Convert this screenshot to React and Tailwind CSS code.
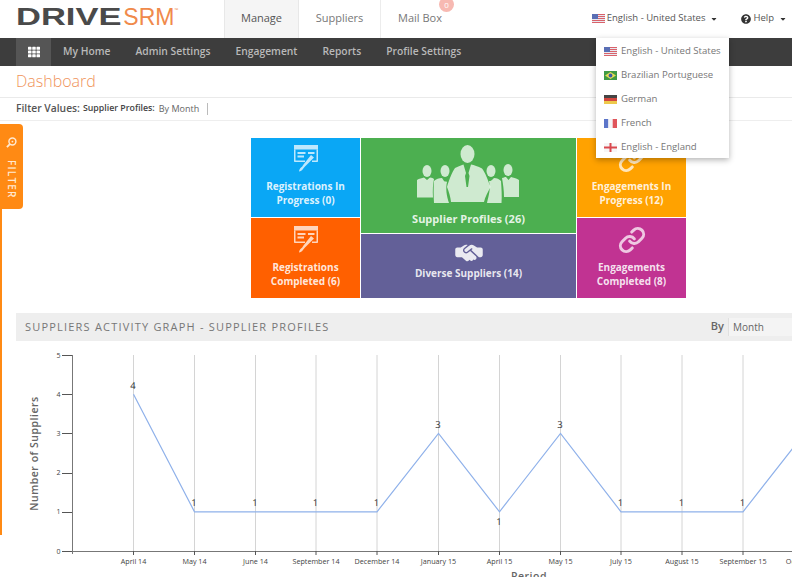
import React from "react";
import { FaTh, FaQuestionCircle, FaCaretDown } from "react-icons/fa";
import { FaHandshakeSimple } from "react-icons/fa6";
import { Link as LinkIcon } from "lucide-react";

const font = { fontFamily: '"Open Sans", sans-serif' };

function FlagUS({ className }) {
  return (
    <svg viewBox="0 0 13 9" className={className}>
      <rect width="13" height="9" fill="#e8e8f0" />
      <path d="M0 0.5H13M0 2.5H13M0 4.5H13M0 6.5H13M0 8.5H13" stroke="#d9626a" strokeWidth="1" />
      <rect width="6" height="5" fill="#5a6fb5" />
    </svg>
  );
}
function FlagBR({ className }) {
  return (
    <svg viewBox="0 0 13 9" className={className}>
      <rect width="13" height="9" fill="#3f9a45" />
      <path d="M6.5 1L12 4.5L6.5 8L1 4.5Z" fill="#e8dc55" />
      <circle cx="6.5" cy="4.5" r="1.9" fill="#3d5da8" />
    </svg>
  );
}
function FlagDE({ className }) {
  return (
    <svg viewBox="0 0 13 9" className={className}>
      <rect width="13" height="3" fill="#444" />
      <rect y="3" width="13" height="3" fill="#d3463f" />
      <rect y="6" width="13" height="3" fill="#eec94c" />
    </svg>
  );
}
function FlagFR({ className }) {
  return (
    <svg viewBox="0 0 13 9" className={className}>
      <rect width="4.4" height="9" fill="#5c75c9" />
      <rect x="4.4" width="4.3" height="9" fill="#f4f4f6" />
      <rect x="8.7" width="4.3" height="9" fill="#e0555b" />
    </svg>
  );
}
function FlagEN({ className }) {
  return (
    <svg viewBox="0 0 13 9" className={className}>
      <rect width="13" height="9" fill="#f6f6f6" />
      <rect x="5.5" width="2" height="9" fill="#d9494f" />
      <rect y="3.5" width="13" height="2" fill="#d9494f" />
    </svg>
  );
}

function FormIcon({ className }) {
  return (
    <svg viewBox="0 0 26 27" className={className} fill="currentColor" fillOpacity="0.85">
      <path d="M1 0H25V4.5H1Z" />
      <path d="M1 4.5H2.5V15.5H12V17H2C1.4 17 1 16.6 1 16ZM23.5 4.5H25V16C25 16.6 24.6 17 24 17H19V15.5H23.5Z" />
      <path d="M4.5 7H12.5V9H4.5ZM4.5 10.5H11V12.5H4.5ZM15 7H21.5V9H15Z" />
      <path d="M18 10L21 12.5L13 20.5C11.5 22 10.5 23 10 24C9 25.5 7.5 26.5 6 26.5C6 25 7 23.5 8 22.5C9 22 9.5 21 10.5 19.5Z" />
    </svg>
  );
}

function PeopleIcon({ className }) {
  return (
    <svg viewBox="0 0 120 70" className={className} fill="currentColor">
      <ellipse cx="58.5" cy="14" rx="7" ry="9" />
      <path d="M46 28C50 26 53 25 54.500 24.500L57 33L56 36L57.500 47L59 47L60.500 36L59.500 33L62 24.500C65 25 69 26.500 73 28.500C76 32 79 40 81.500 47C79 52 76 57 75 62H42C41.500 57 40 52 38 47C40 40 43 32 46 28Z" />
      <ellipse cx="18" cy="31" rx="4.500" ry="6" />
      <path d="M8 40C10 38.500 13 38 15 37.500L18 40L21 37.500C23 38 24 38 25 39C24 44 23.500 50 24 57.500H8Z" />
      <ellipse cx="36" cy="31" rx="4.500" ry="6" />
      <path d="M25 41C27 39 30 38 33 38L35 41C36 42 37 41 38 42C36.500 48 37.500 56 40 63H25C24.500 56 24.500 48 25 41Z" />
      <ellipse cx="82" cy="31" rx="4.500" ry="6" />
      <path d="M80 41C81 41 82 41 83 40L85 38C88 38 90 39 92 41C92.500 48 93 56 92.500 63H78C79.500 56 82 49 80 41Z" />
      <ellipse cx="99" cy="30" rx="4.500" ry="6" />
      <path d="M93 38C95 37.500 96 37 97 37L99.500 40L102 37C104 37.500 107 38 110 40V57H95C95 50 94 44 93 38Z" />
    </svg>
  );
}

const langs = [
  ["English - United States", FlagUS],
  ["Brazilian Portuguese", FlagBR],
  ["German", FlagDE],
  ["French", FlagFR],
  ["English - England", FlagEN],
];

const navItems = ["My Home", "Admin Settings", "Engagement", "Reports", "Profile Settings"];

function Chart() {
  const xs = [133.5, 194.5, 255.5, 316, 377, 438.5, 499.5, 560.5, 621, 682, 743, 804.5];
  const vals = [4, 1, 1, 1, 1, 3, 1, 3, 1, 1, 1, 3];
  const names = ["April 14", "May 14", "June 14", "September 14", "December 14", "January 15", "April 15", "May 15", "July 15", "August 15", "September 15", "October 15"];
  const yOf = (v) => 551 - v * 39.2;
  const points = xs.map((x, i) => `${x},${yOf(vals[i])}`).join(" ");
  return (
    <svg viewBox="16 341 776 236" className="block w-[776px] h-[236px]" style={font}>
      {xs.map((x) => (
        <line key={x} x1={x} x2={x} y1="355" y2="551" stroke="#d4d4d4" strokeWidth="1" />
      ))}
      <line x1="72.5" x2="72.5" y1="355" y2="554" stroke="#777" />
      <line x1="62" x2="804" y1="551.5" y2="551.5" stroke="#777" />
      {[0, 1, 2, 3, 4, 5].map((v) => (
        <g key={v}>
          <line x1="62" x2="72" y1={Math.round(yOf(v)) + 0.5} y2={Math.round(yOf(v)) + 0.5} stroke="#555" />
          <text x="58.5" y={yOf(v) + 2.5} fontSize="7" fill="#444" textAnchor="middle">{v}</text>
        </g>
      ))}
      {xs.map((x, i) => (
        <g key={names[i]}>
          <line x1={x} x2={x} y1="551" y2="555" stroke="#555" />
          <text x={x} y="564" fontSize="7.2" fill="#444" textAnchor="middle">{names[i]}</text>
        </g>
      ))}
      <polyline points={points} fill="none" stroke="#8fb1ea" strokeWidth="1.2" />
      {xs.slice(0, 11).map((x, i) => (
        <text key={x} x={x - 0.5} y={i === 6 ? yOf(vals[i]) + 13 : yOf(vals[i]) - 5.5} fontSize="9.5" fill="#333" textAnchor="middle" style={{ textRendering: "geometricPrecision" }}>{vals[i]}</text>
      ))}
      <text x="0" y="0" transform="translate(38 453.5) rotate(-90)" fontSize="10.5" fontWeight="600" letterSpacing="0.5" fill="#666" textAnchor="middle">Number of Suppliers</text>
      <text x="529" y="580" fontSize="10.5" fontWeight="600" letterSpacing="0.5" fill="#666" textAnchor="middle">Period</text>
    </svg>
  );
}

function Tile({ bg, className = "", icon, lines }) {
  return (
    <div className={`flex flex-col items-center text-center text-[#ffffffdd] ${bg} ${className}`}>
      {icon}
      <div className="text-[10px] leading-[14px] font-bold whitespace-pre-line">{lines}</div>
    </div>
  );
}

export default function App() {
  return (
    <div className="relative w-[792px] h-[577px] overflow-hidden bg-white flex flex-col" style={font}>
      <header className="h-[38px] flex shrink-0">
        <div className="w-[224px] pl-[16px] pb-[3px] flex items-center">
          <span className="text-[23px] leading-none font-bold text-[#4a4a4a] scale-x-[1.5] origin-left" style={{ fontFamily: '"Liberation Sans", sans-serif' }}>DRIVE</span>
          <span className="ml-[37px] text-[23px] leading-none font-light text-[#f08a4b]" style={{ fontFamily: '"Liberation Sans", sans-serif' }}>SRM</span>
          <span className="text-[5px] self-start mt-[7px] text-[#f08a4b]">™</span>
        </div>
        <div className="w-[75px] pb-[1px] flex items-center justify-center bg-[#f5f5f5] border-x border-[#e8e8e8] text-[11px] text-[#555]">Manage</div>
        <div className="w-[82px] pb-[1px] flex items-center justify-center border-r border-[#ececec] text-[11px] text-[#777]">Suppliers</div>
        <div className="relative w-[78px] pb-[1px] flex items-center justify-center text-[11px] text-[#777]">
          Mail Box
          <span className="absolute left-[58px] top-[-3px] w-[15px] h-[15px] rounded-full bg-[#f7b9b2] text-white text-[8px] flex items-center justify-center">0</span>
        </div>
        <div className="ml-auto pb-[1px] flex items-center text-[9.5px] text-[#555]">
          <FlagUS className="w-[13px] h-[9px] mr-[2px]" />
          <span>English - United States</span>
          <FaCaretDown className="w-[8px] h-[8px] ml-[5px] text-[#333]" />
          <FaQuestionCircle className="w-[10px] h-[10px] ml-[23px] text-[#333]" />
          <span className="ml-[2px]">Help</span>
          <FaCaretDown className="w-[8px] h-[8px] ml-[5px] mr-[5px] text-[#333]" />
        </div>
      </header>

      <nav className="h-[28px] bg-[#3d3d3d] flex shrink-0 pl-[16px] items-stretch">
        <div className="w-[35px] bg-[#555555] flex items-center justify-center mr-[12px]">
          <FaTh className="w-[12px] h-[12px] text-white" />
        </div>
        <div className="flex items-center gap-[25px] text-[10.3px] font-semibold text-[#b9b9b9]">
          {navItems.map((n) => <span key={n}>{n}</span>)}
        </div>
      </nav>

      <div className="h-[32px] shrink-0 pl-[16px] pb-[2px] flex items-center border-b border-[#eaeaea] text-[16px] font-light text-[#f0935b]">Dashboard</div>
      <div className="h-[23px] shrink-0 pl-[16px] flex items-center border-b border-[#eeeeee] text-[#555]">
        <span className="text-[10.3px] font-semibold">Filter Values:</span>
        <span className="ml-[3px] text-[8.8px] font-semibold text-[#444]">Supplier Profiles:</span>
        <span className="ml-[4px] text-[9px] text-[#666]">By Month</span>
        <span className="ml-[8px] w-px h-[12px] bg-[#bbb]" />
      </div>

      <main className="flex-1 pl-[16px] flex flex-col min-h-0">
        <div className="mt-[17px] ml-[235px] w-[435px] h-[160px] grid grid-cols-[109px_215px_109px] grid-rows-[79px_15px_64px] gap-px shrink-0">
          <Tile bg="bg-[#0aa7f5]" className="col-start-1 row-start-1 pt-[7px]" icon={<FormIcon className="w-[26px] h-[27px] mb-[7px]" />} lines={"Registrations In\nProgress (0)"} />
          <Tile bg="bg-[#ff6000]" className="col-start-1 row-start-2 row-span-2 pt-[8px]" icon={<FormIcon className="w-[26px] h-[27px] mb-[7px]" />} lines={"Registrations\nCompleted (6)"} />
          <div className="col-start-2 row-start-1 row-span-2 bg-[#4caf50] text-[#ffffffbb] flex flex-col items-center pt-[2px]">
            <PeopleIcon className="w-[120px] h-[70px]" />
            <div className="mt-[2px] text-[11px] leading-[14px] font-bold text-[#ffffffdd]">Supplier Profiles (26)</div>
          </div>
          <div className="col-start-2 row-start-3 bg-[#636098] text-[#ffffffdd] flex flex-col items-center pt-[8px]">
            <FaHandshakeSimple className="w-[28px] h-[22px] mb-[2px]" />
            <div className="text-[10px] leading-[14px] font-bold">Diverse Suppliers (14)</div>
          </div>
          <Tile bg="bg-[#ffa200]" className="col-start-3 row-start-1 pt-[7px]" icon={<LinkIcon strokeWidth={2.6} className="w-[28px] h-[28px] mb-[6px] text-[#ffffffbb]" />} lines={"Engagements In\nProgress (12)"} />
          <Tile bg="bg-[#c13392]" className="col-start-3 row-start-2 row-span-2 pt-[8px]" icon={<LinkIcon strokeWidth={2.6} className="w-[28px] h-[28px] mb-[6px] text-[#ffffffbb]" />} lines={"Engagements\nCompleted (8)"} />
        </div>

        <section className="mt-[15px] flex-1 min-h-0">
          <div className="h-[28px] bg-[#eeeeee] flex items-center pl-[9px] w-[776px]">
            <span className="text-[11px] tracking-[1.2px] text-[#777]">SUPPLIERS ACTIVITY GRAPH - SUPPLIER PROFILES</span>
            <span className="ml-auto pb-[2px] text-[11px] font-semibold text-[#666]">By</span>
            <div className="ml-[4px] w-[64px] h-[18px] bg-[#f4f4f4] border-l border-[#e0e0e0] text-[10px] text-[#666] pl-[4px] flex items-center">Month</div>
          </div>
          <Chart />
        </section>
      </main>

      {/* Filter tab overlay */}
      <div className="absolute left-0 top-[124px] w-[2px] h-[411px] bg-[#ff8a14]" />
      <div className="absolute left-0 top-[124px] w-[23px] h-[85px] bg-[#ff8a14] rounded-r-[4px] flex flex-col items-center pt-[13px] text-[#ffe9d2]">
        <svg viewBox="0 0 12 12" className="w-[11px] h-[11px]" fill="none" stroke="currentColor" strokeWidth="1.6">
          <circle cx="7" cy="5" r="3.8" />
          <path d="M4.2 7.8L1 11" strokeWidth="2" />
          <circle cx="7" cy="5" r="1" fill="currentColor" stroke="none" />
        </svg>
        <span className="mt-[12px] text-[10px] font-semibold tracking-[1.2px] [writing-mode:vertical-rl]">FILTER</span>
      </div>

      {/* Language dropdown overlay */}
      <div className="absolute left-[596px] top-[38px] w-[133px] h-[120px] pt-[1px] bg-white shadow-[0_2px_6px_rgba(0,0,0,0.3)] flex flex-col">
        {langs.map(([label, Flag]) => (
          <div key={label} className="h-[24px] shrink-0 flex items-center pl-[8px] text-[9.6px] text-[#777] whitespace-nowrap">
            <Flag className="w-[13px] h-[9px] mr-[4px] shrink-0" />
            {label}
          </div>
        ))}
      </div>
    </div>
  );
}
